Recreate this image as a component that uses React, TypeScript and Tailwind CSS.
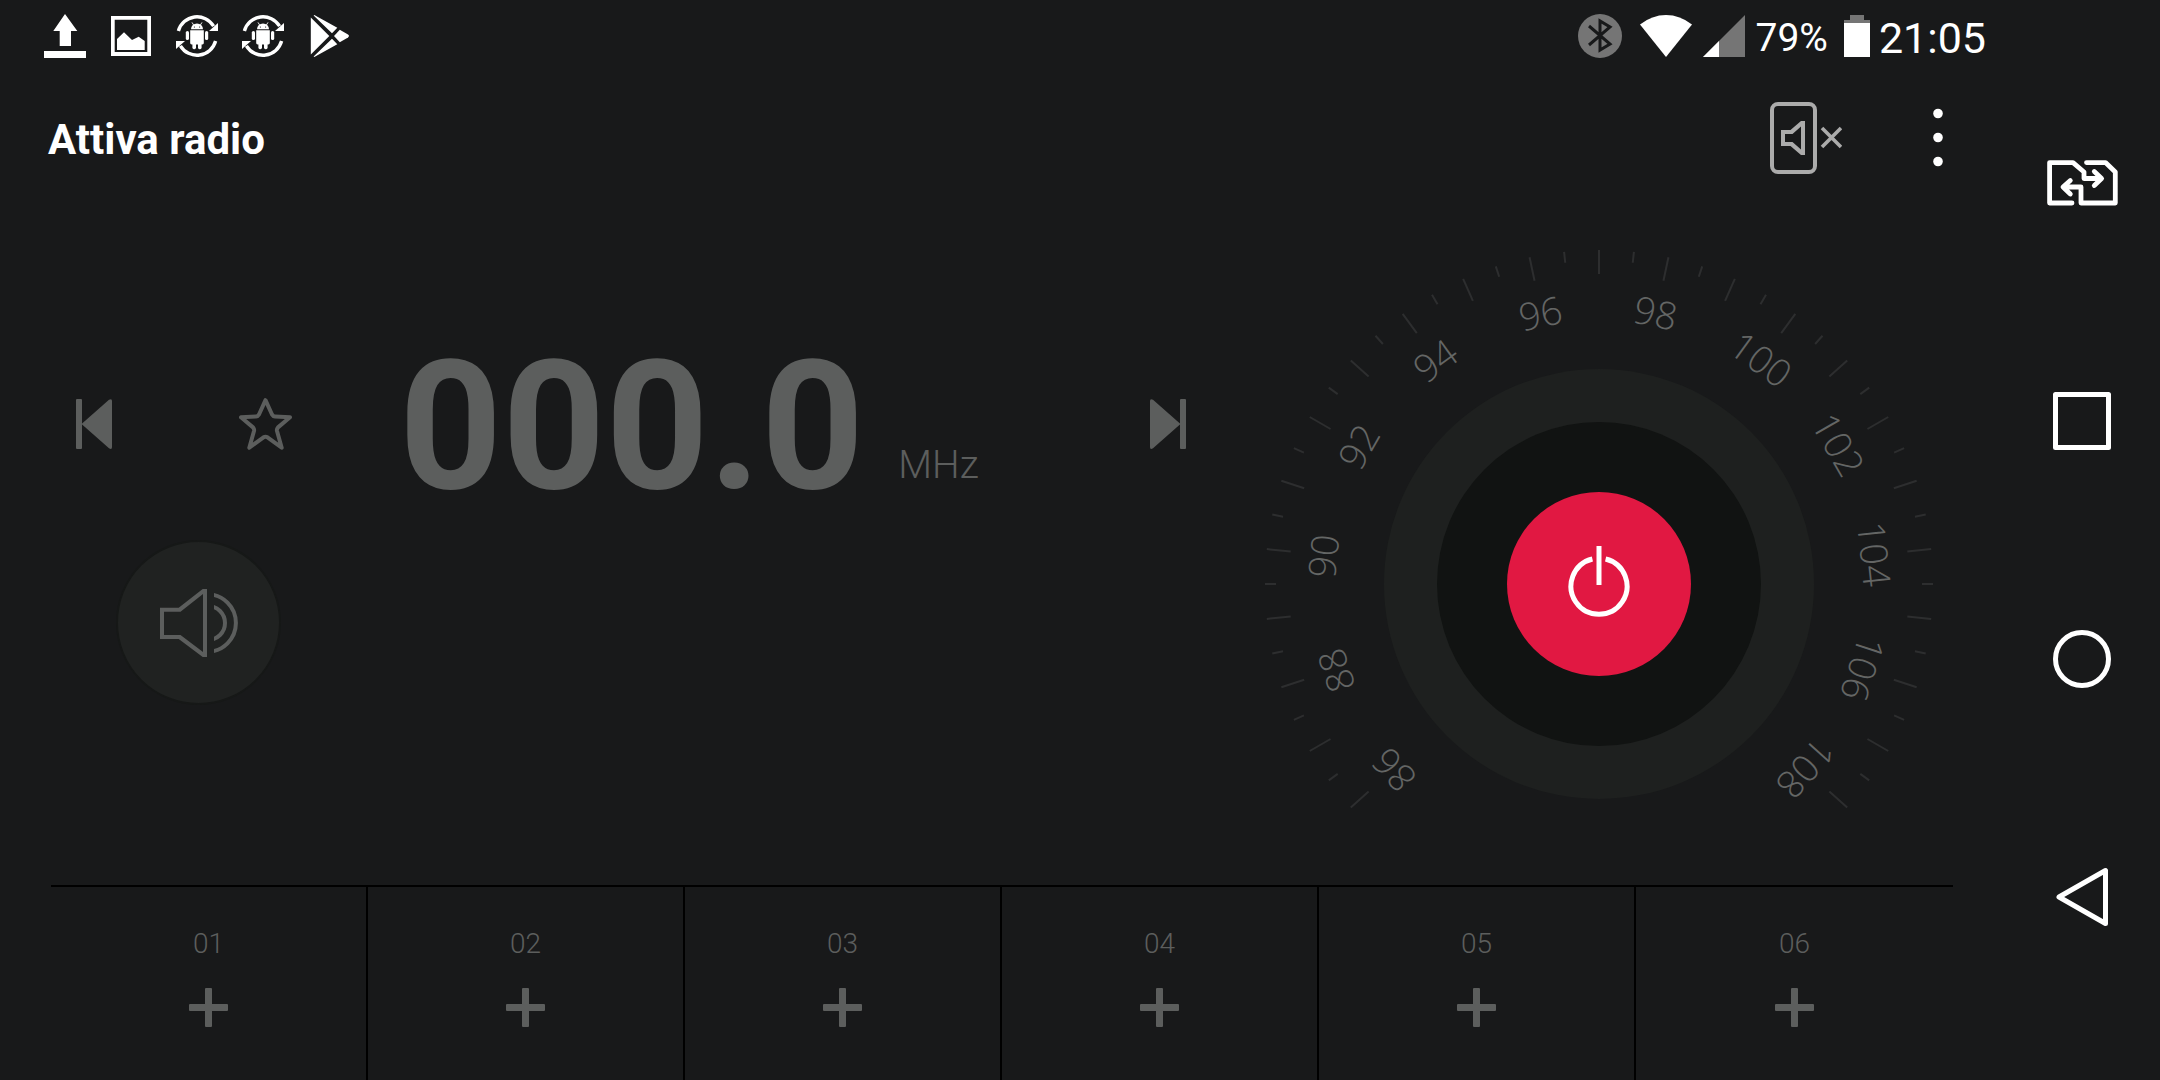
import React, { useState } from 'react';

const PRESETS = ['01', '02', '03', '04', '05', '06'];
const FREQUENCIES = [86, 88, 90, 92, 94, 96, 98, 100, 102, 104, 106, 108];
const TICKS = Array.from({ length: 45 }, (_, i) => i);

const UploadIcon = () => (
    <svg width="42" height="44" viewBox="0 0 42 44" fill="currentColor">
        <path d="M21 0L33.3 17H27V32H15.7V17H9.3ZM0 37H42V44H0Z" />
    </svg>
);

const PictureIcon = () => (
    <svg width="42" height="42" viewBox="-1 -1 42 42" fill="currentColor">
        <path fillRule="evenodd" d="M0 0H40V40H0ZM3.7 3.7V36H36.3V3.7Z" />
        <path d="M6 34V23L13 16.3L21 24L27.7 20.7L33.7 25V34Z" />
    </svg>
);

const AndroidSyncIcon = () => (
    <svg width="42" height="42" viewBox="0 0 42 42" fill="currentColor">
        <path d="M2.4 16A19.3 19.3 0 0 1 37.6 11.2" fill="none" stroke="currentColor" strokeWidth="3.4" />
        <path d="M42.5 7.5V16H33Z" />
        <g transform="rotate(180 21 21)">
            <path d="M2.4 16A19.3 19.3 0 0 1 37.6 11.2" fill="none" stroke="currentColor" strokeWidth="3.4" />
            <path d="M42.5 7.5V16H33Z" />
        </g>
        <path d="M15 14.2A6 5.8 0 0 1 27 14.2Z" />
        <path d="M16 7.4L18 10.6M26 7.4L24 10.6" stroke="currentColor" strokeWidth="0.9" />
        <circle cx="18.4" cy="12" r="0.6" fill="#18191a" />
        <circle cx="23.6" cy="12" r="0.6" fill="#18191a" />
        <path d="M14.2 15.3H27.8V28Q27.8 29.4 26.4 29.4H15.6Q14.2 29.4 14.2 28Z" />
        <rect x="9.8" y="16" width="3.2" height="9" rx="1.6" />
        <rect x="29" y="16" width="3.2" height="9" rx="1.6" />
        <rect x="16.4" y="26" width="3.6" height="8.2" rx="1.6" />
        <rect x="22" y="26" width="3.6" height="8.2" rx="1.6" />
    </svg>
);

const PlayStoreIcon = () => (
    <svg width="42" height="42" viewBox="0 0 42 42" fill="currentColor">
        <path d="M2.8 2.6L21.3 21L2.8 39.4Z" />
        <path d="M6.3 0L29.3 12.8L24 18.2L5.6 0.6ZM6.3 42L29.3 29.2L24 23.8L5.6 41.4Z" />
        <path d="M31.8 14.8L40 19.6Q42 21 40 22.4L31.8 27.2L26 21Z" />
    </svg>
);

const BluetoothIcon = () => (
    <svg width="44" height="44" viewBox="0 0 44 44">
        <circle cx="22" cy="22" r="22" fill="#757575" />
        <path d="M11 12L32 30L22 36V7L32 13L11 31" fill="none" stroke="#18191a" strokeWidth="3" />
    </svg>
);

const WifiIcon = () => (
    <svg width="52" height="42" viewBox="0 0 52 42" fill="currentColor">
        <path d="M0 9.5Q12 0 26 0T52 9.5L26 42Z" />
    </svg>
);

const SignalIcon = () => (
    <svg width="42" height="42" viewBox="0 0 42 42">
        <path d="M42 0V42H0Z" fill="#757575" />
        <path d="M16 26V42H0Z" fill="#fff" />
    </svg>
);

const BatteryIcon = () => (
    <svg width="26" height="42" viewBox="0 0 26 42">
        <path d="M6 0H20V5H26V8H0V5H6Z" fill="#757575" />
        <path d="M0 8H26V42H0Z" fill="#fff" />
    </svg>
);

const PhoneSpeakerOffIcon = () => (
    <svg width="72" height="72" viewBox="0 0 72 72" fill="currentColor">
        <rect x="2" y="2" width="43" height="68" rx="6" fill="none" stroke="currentColor" strokeWidth="4" />
        <path fillRule="evenodd" d="M11 28H20.5L31 19H35V53H31L20.5 44H11ZM15 32V40H22.5L31 47.5V24.5L22.5 32Z" />
        <path d="M52 26L71 45M71 26L52 45" stroke="currentColor" strokeWidth="3.6" />
    </svg>
);

const MoreIcon = () => (
    <svg width="10" height="60" viewBox="0 0 10 60" fill="currentColor">
        <circle cx="5" cy="5.5" r="4.8" />
        <circle cx="5" cy="29.5" r="4.8" />
        <circle cx="5" cy="53.5" r="4.8" />
    </svg>
);

const SkipIcon: React.FC<{ className?: string }> = ({ className }) => (
    <svg width="36" height="50" viewBox="0 0 36 50" fill="currentColor" className={className}>
        <rect width="6" height="50" rx="1" />
        <path d="M5.5 25L33 0.8Q36 -1 36 2V48Q36 51 33 49.2Z" />
    </svg>
);

const StarIcon = () => (
    <svg width="53" height="52" viewBox="0 0 53 52" fill="none" stroke="currentColor" strokeWidth="4" strokeLinejoin="round">
        <path d="M26.5 2.2L33 16.5Q34 18.3 36 18.4L51 19.3L39 29.4Q37.5 31 38 33L42.7 49.7L28.5 39.3Q26.5 38.2 24.5 39.3L10.3 49.7L15 33Q15.5 31 14 29.4L2 19.3L17 18.4Q19 18.3 20 16.5Z" />
    </svg>
);

const VolumeIcon = () => (
    <svg width="78" height="68" viewBox="0 0 78 68" fill="currentColor">
        <clipPath id="waves">
            <rect x="54" width="24" height="68" />
        </clipPath>
        <path fillRule="evenodd" d="M0 18.7H18.7L42.7 0H47V68H42.7L18.7 50H0ZM4 22.7V46H20.5L43 63V5L20.5 22.7Z" />
        <g clipPath="url(#waves)" fill="none" stroke="currentColor" strokeWidth="4">
            <circle cx="47.2" cy="34" r="28.7" />
            <circle cx="48" cy="34" r="17" />
        </g>
    </svg>
);

const PowerIcon = () => (
    <svg width="62" height="72" viewBox="0 0 62 72" fill="none" stroke="currentColor" strokeWidth="5">
        <path d="M31 0V39" />
        <path d="M24.4 13A28 28 0 1 0 37.6 13" />
    </svg>
);

const PlusIcon = () => (
    <svg width="39" height="39" viewBox="0 0 39 39" fill="currentColor">
        <rect y="16" width="39" height="7" rx="1" />
        <rect x="16" width="7" height="39" rx="1" />
    </svg>
);

const SwapSimIcon = () => (
    <svg width="71" height="46" viewBox="0 0 71 46" fill="none" stroke="currentColor" strokeWidth="4.8" strokeLinecap="round" strokeLinejoin="round">
        <path d="M25 43H2.6V2.6H26L37 12V18.5H54M47.3 11.5L54.6 18.5L47.3 25.5" />
        <path d="M39.5 2.6H58.5L68.3 12V43H34V27H17M23.3 20.5L16 27L23.3 34" />
    </svg>
);

const SquareIcon = () => (
    <svg width="58" height="58" viewBox="0 0 58 58" fill="none" stroke="currentColor" strokeWidth="5" strokeLinejoin="round">
        <rect x="2.5" y="2.5" width="53" height="53" />
    </svg>
);

const CircleIcon = () => (
    <svg width="58" height="58" viewBox="0 0 58 58" fill="none" stroke="currentColor" strokeWidth="5">
        <circle cx="29" cy="29" r="26.5" />
    </svg>
);

const BackIcon = () => (
    <svg width="54" height="60" viewBox="0 0 54 60" fill="none" stroke="currentColor" strokeWidth="5" strokeLinejoin="round">
        <path d="M50.5 3.5V56.5L4 30Z" />
    </svg>
);

const NAV_ITEMS = [
    { label: 'Switch SIM', Icon: SwapSimIcon },
    { label: 'Recent apps', Icon: SquareIcon },
    { label: 'Home', Icon: CircleIcon },
    { label: 'Back', Icon: BackIcon },
];

const StatusBar = () => (
    <div className="flex h-[72px] items-center justify-between pl-11 pr-[18px]">
        <div className="flex items-center gap-6">
            <UploadIcon />
            <PictureIcon />
            <AndroidSyncIcon />
            <AndroidSyncIcon />
            <PlayStoreIcon />
        </div>
        <div className="flex items-center">
            <BluetoothIcon />
            <div className="ml-[18px] flex items-center gap-[11px]">
                <WifiIcon />
                <SignalIcon />
                <span className="pt-1 text-[39px] leading-none">79%</span>
            </div>
            <div className="ml-4 flex items-center gap-[9px]">
                <BatteryIcon />
                <span className="pt-1 text-[43px] leading-none">21:05</span>
            </div>
        </div>
    </div>
);

const Dial: React.FC<{ on: boolean; onToggle: () => void }> = ({ on, onToggle }) => (
    <div className="relative mr-[69px] mt-11 h-[568px] w-[672px] shrink-0">
        <svg viewBox="-336 -336 672 568" className="h-full w-full">
            {TICKS.map(i => (
                <line
                    key={i}
                    x1="0"
                    x2="0"
                    y1="-334"
                    y2={i % 2 === 0 ? -310 : -323}
                    stroke="#2d2e2f"
                    strokeWidth="2"
                    transform={`rotate(${i * 6 - 132})`}
                />
            ))}
            {FREQUENCIES.map((f, i) => (
                <text
                    key={f}
                    x="-1"
                    y="-263"
                    textAnchor="middle"
                    fill="#646665"
                    transform={`rotate(${i * 24 - 132})`}
                    className="font-['Open_Sans',sans-serif] text-[38px] font-light"
                >
                    {f}
                </text>
            ))}
            <circle r="215" fill="#1e201f" />
            <circle r="162" fill="#111312" />
        </svg>
        {/* Power button sits on the dial's hub */}
        <button
            aria-label="Power"
            aria-pressed={on}
            onClick={onToggle}
            className="absolute left-1/2 top-[336px] flex h-[184px] w-[184px] -translate-x-1/2 -translate-y-1/2 items-center justify-center rounded-full bg-[#e11842] pb-1"
        >
            <PowerIcon />
        </button>
    </div>
);

export default function App() {
    const [on, setOn] = useState(false);

    return (
        <div className="flex min-h-screen bg-[#18191a] font-[Roboto,sans-serif] text-white">
            <main className="flex flex-1 flex-col">
                <StatusBar />

                {/* Header */}
                <header className="flex h-[132px] items-center justify-between pl-12 pr-[61px]">
                    <h1 className="pt-1 text-[42px] font-bold leading-none">Attiva radio</h1>
                    <div className="flex items-center gap-[91px]">
                        <button aria-label="Speaker off" className="text-[#ababab]"><PhoneSpeakerOffIcon /></button>
                        <button aria-label="More options"><MoreIcon /></button>
                    </div>
                </header>

                {/* Tuner */}
                <div className="flex flex-1">
                    <section className="flex-1 pl-[76px] pr-[77px] pt-[130px] text-[#5c5e5d]">
                        <div className="flex h-[180px] items-center">
                            <button aria-label="Previous station"><SkipIcon /></button>
                            <button aria-label="Favourite" className="ml-[127px]"><StarIcon /></button>
                            <div className="ml-[107px] flex items-end gap-[34px] pt-1.5">
                                <span className="text-[180px] font-bold leading-none">000.0</span>
                                <span className="pb-8 text-[39px] font-light leading-none">MHz</span>
                            </div>
                            <button aria-label="Next station" className="ml-auto"><SkipIcon className="rotate-180" /></button>
                        </div>
                        <button
                            aria-label="Volume"
                            className="ml-10 mt-[26px] flex h-[165px] w-[165px] items-center justify-center rounded-full border-2 border-[#161817] bg-[#202221]"
                        >
                            <VolumeIcon />
                        </button>
                    </section>
                    <Dial on={on} onToggle={() => setOn(!on)} />
                </div>

                {/* Presets */}
                <div className="mx-[51px] grid h-[195px] grid-cols-6 border-t-2 border-black text-[#5c5e5d]">
                    {PRESETS.map(p => (
                        <button
                            key={p}
                            aria-label={`Add preset ${p}`}
                            className="flex flex-col items-center gap-[30px] border-r-2 border-black pt-[43px] last:border-r-0"
                        >
                            <span className="text-[28px] font-light leading-7">{p}</span>
                            <PlusIcon />
                        </button>
                    ))}
                </div>
            </main>

            {/* System navigation */}
            <nav className="grid w-[156px] grid-rows-4 py-16">
                {NAV_ITEMS.map(({ label, Icon }) => (
                    <button key={label} aria-label={label} className="flex items-center justify-center">
                        <Icon />
                    </button>
                ))}
            </nav>
        </div>
    );
}
